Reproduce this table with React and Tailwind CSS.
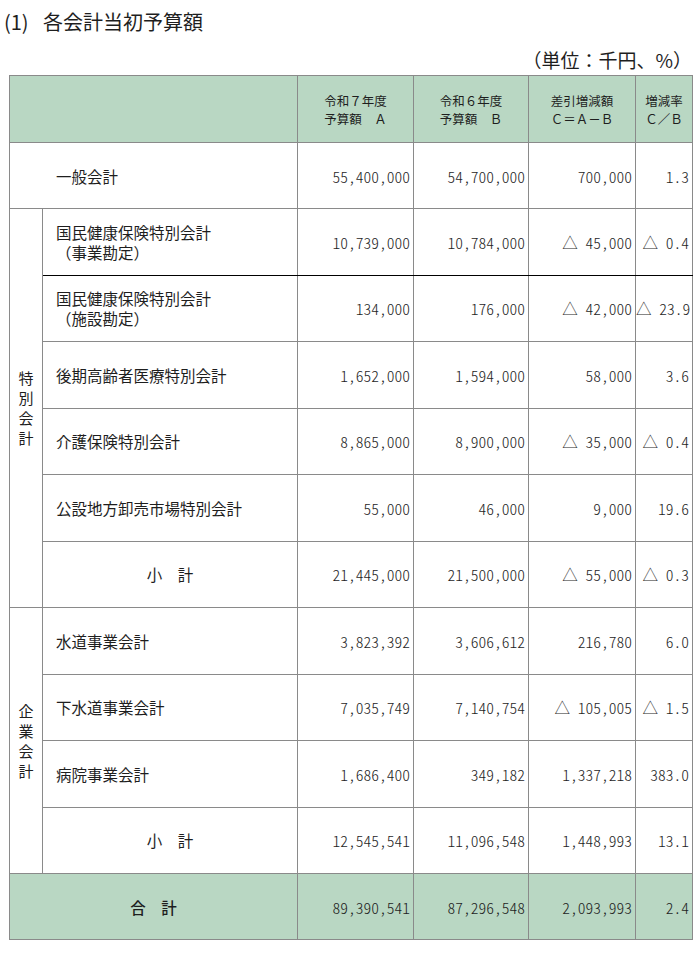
const jp = "font-['Noto_Sans_CJK_JP','Noto_Sans_CJK_SC',sans-serif]";

const rows = [
  { group: "tok", name: ["国民健康保険特別会計", "（事業勘定）"], a: "10,739,000", b: "10,784,000", c: "△ 45,000", r: "△ 0.4", dark: true },
  { group: "tok", name: ["国民健康保険特別会計", "（施設勘定）"], a: "134,000", b: "176,000", c: "△ 42,000", r: "△ 23.9" },
  { group: "tok", name: ["後期高齢者医療特別会計"], a: "1,652,000", b: "1,594,000", c: "58,000", r: "3.6" },
  { group: "tok", name: ["介護保険特別会計"], a: "8,865,000", b: "8,900,000", c: "△ 35,000", r: "△ 0.4" },
  { group: "tok", name: ["公設地方卸売市場特別会計"], a: "55,000", b: "46,000", c: "9,000", r: "19.6" },
  { group: "tok", sub: true, name: ["小　計"], a: "21,445,000", b: "21,500,000", c: "△ 55,000", r: "△ 0.3" },
  { group: "kig", name: ["水道事業会計"], a: "3,823,392", b: "3,606,612", c: "216,780", r: "6.0" },
  { group: "kig", name: ["下水道事業会計"], a: "7,035,749", b: "7,140,754", c: "△ 105,005", r: "△ 1.5" },
  { group: "kig", name: ["病院事業会計"], a: "1,686,400", b: "349,182", c: "1,337,218", r: "383.0" },
  { group: "kig", sub: true, name: ["小　計"], a: "12,545,541", b: "11,096,548", c: "1,448,993", r: "13.1" },
];

const cell = "border border-[#8a8a8a] text-[15.5px] leading-[20px]";
const num = cell + " text-right pr-[3px] whitespace-nowrap font-light [font-feature-settings:'hwid']";

function VLabel({ text }) {
  return (
    <div className="flex flex-col items-center leading-[20px] text-[15px]">
      {text.split("").map((c, i) => (
        <span key={i}>{c}</span>
      ))}
    </div>
  );
}

function Head({ l1, l2 }) {
  return (
    <th className="border border-[#8a8a8a] font-normal text-[12.5px] leading-[18px] text-center align-middle pt-[1px]">
      <div>{l1}</div>
      <div>{l2}</div>
    </th>
  );
}

export default function App() {
  return (
    <div className={"w-[700px] bg-white text-[#1e1e1e] " + jp}>
      <h1 className="pt-[8px] pl-[4px] text-[20px] leading-[28px] font-normal">
        <span className="mr-[10px]">(1)</span> 各会計当初予算額
      </h1>
      <div className="mt-[12px] pr-[8px] text-right text-[19px] leading-[24px]">（単位：千円、%）</div>
      <table className="mt-[3px] ml-[9px] w-[683px] border-collapse table-fixed border border-[#777]">
        <colgroup>
          <col className="w-[33px]" />
          <col className="w-[255px]" />
          <col className="w-[116px]" />
          <col className="w-[115px]" />
          <col className="w-[107px]" />
          <col className="w-[57px]" />
        </colgroup>
        <tbody>
          <tr className="h-[67px] bg-[#b9d7c3]">
            <th colSpan={2} className="border border-[#8a8a8a]"></th>
            <Head l1="令和７年度" l2="予算額　Ａ" />
            <Head l1="令和６年度" l2="予算額　Ｂ" />
            <Head l1="差引増減額" l2="Ｃ＝Ａ－Ｂ" />
            <Head l1="増減率" l2="Ｃ／Ｂ" />
          </tr>
          <tr className="h-[66px]">
            <td colSpan={2} className={cell + " pl-[46px]"}>一般会計</td>
            <td className={num}>55,400,000</td>
            <td className={num}>54,700,000</td>
            <td className={num}>700,000</td>
            <td className={num}>1.3</td>
          </tr>
          {rows.map((r, i) => {
            const first = i === 0 || rows[i - 1].group !== r.group;
            const span = rows.filter((x) => x.group === r.group).length;
            const bb = r.dark ? " border-b-black" : "";
            return (
              <tr key={i} className="h-[66.5px]">
                {first && (
                  <td rowSpan={span} className={cell + " align-middle"}>
                    <VLabel text={r.group === "tok" ? "特別会計" : "企業会計"} />
                  </td>
                )}
                <td className={cell + bb + (r.sub ? " text-center" : " pl-[13px]")}>
                  {r.name.map((n, j) => (
                    <div key={j}>{n}</div>
                  ))}
                </td>
                <td className={num + bb}>{r.a}</td>
                <td className={num + bb}>{r.b}</td>
                <td className={num + bb}>{r.c}</td>
                <td className={num + bb}>{r.r}</td>
              </tr>
            );
          })}
          <tr className="h-[66px] bg-[#b9d7c3]">
            <td colSpan={2} className={cell + " text-center text-[14px] font-medium"}>合　計</td>
            <td className={num}>89,390,541</td>
            <td className={num}>87,296,548</td>
            <td className={num}>2,093,993</td>
            <td className={num}>2.4</td>
          </tr>
        </tbody>
      </table>
    </div>
  );
}
